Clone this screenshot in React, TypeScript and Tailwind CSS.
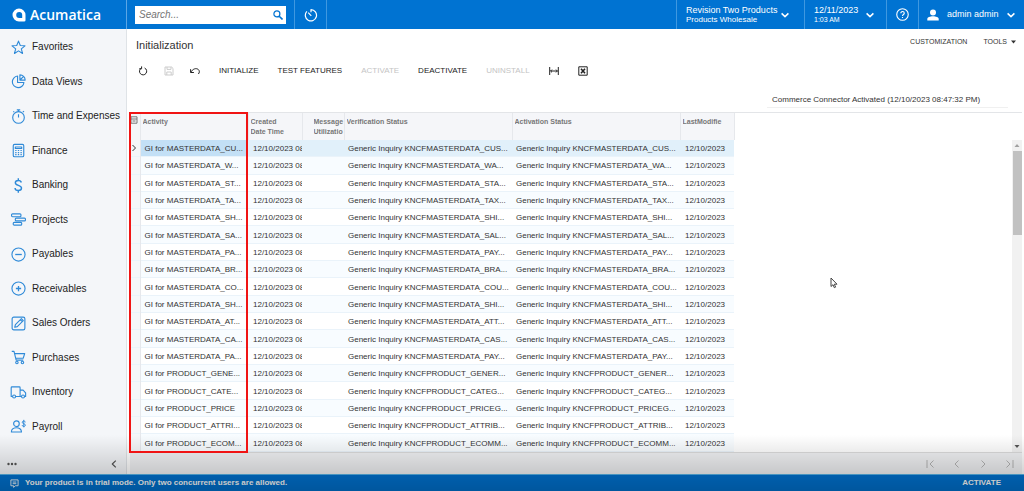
import type { ReactNode } from "react";
import clsx from "clsx";

const menu = [
    { name: "Favorites", icon: "star" },
    { name: "Data Views", icon: "pie" },
    { name: "Time and Expenses", icon: "watch" },
    { name: "Finance", icon: "calculator" },
    { name: "Banking", icon: "dollar" },
    { name: "Projects", icon: "bars" },
    { name: "Payables", icon: "minus" },
    { name: "Receivables", icon: "plus" },
    { name: "Sales Orders", icon: "edit" },
    { name: "Purchases", icon: "cart" },
    { name: "Inventory", icon: "truck" },
    { name: "Payroll", icon: "payroll" },
];

const menuIcons: Record<string, ReactNode> = {
    star: <path d="M8 1.2l1.9 4.7 5 .3-3.9 3.2 1.3 4.9L8 11.6l-4.3 2.7L5 9.4 1.1 6.2l5-.3z" />,
    pie: (
        <>
            <path d="M7 2.2a6.2 6.2 0 1 0 6.8 6.8H7z" />
            <path d="M9.5.9v5.6h5.6A5.7 5.7 0 0 0 9.5.9zM9.6 6.4l3.8-3.8" />
        </>
    ),
    watch: (
        <>
            <circle cx="8" cy="9" r="6.2" />
            <path d="M8 5.5V9M8 .8v2M6.2.9h3.6M12.6 3.4l1.3-1.2M3.4 3.4L2.5 2.6" />
        </>
    ),
    calculator: (
        <>
            <rect x="2.4" y="1.4" width="11.2" height="13.2" rx="1.4" />
            <path d="M4.6 4.2h6.8v1.6H4.6z" />
            <path d="M4.5 8h1.4M7.3 8h1.4M10.1 8h1.4M4.5 10.2h1.4M7.3 10.2h1.4M10.1 10.2h1.4M4.5 12.4h1.4M7.3 12.4h1.4M10.1 12.4h1.4" />
        </>
    ),
    dollar: <path d="M11 4.800C10.700 3.300 9.500 2.600 7.800 2.600 6 2.600 4.600 3.500 4.600 5c0 3.500 6.600 2.200 6.600 5.700 0 1.600-1.400 2.700-3.400 2.700S4.400 12.300 4.300 10.600M7.800 .2v2.400M7.800 13.400v2.400" strokeWidth="1.500" />,
    bars: (
        <>
            <rect x=".6" y="2" width="10" height="3" rx="1" />
            <rect x="4.600" y="6.500" width="10.800" height="3" rx="1" />
            <rect x="2.400" y="11" width="9" height="3" rx="1" />
        </>
    ),
    minus: (
        <>
            <circle cx="8" cy="8" r="7" />
            <path d="M4.500 8h7" strokeWidth="1.400" />
        </>
    ),
    plus: (
        <>
            <circle cx="8" cy="8" r="7" />
            <path d="M5.200 8h5.600M8 5.200v5.600" strokeWidth="1.400" />
        </>
    ),
    edit: (
        <>
            <rect x="1.200" y="1.200" width="13.600" height="13.600" rx="1.800" />
            <path d="M4 12l.7-2.700 6.400-6.400 2 2-6.400 6.400zM10 4l2 2" />
        </>
    ),
    cart: (
        <>
            <path d="M.8 1.500h2.400l2.300 9.300h7.600M3.800 3.800h10.800l-1.600 5H5" />
            <circle cx="6.300" cy="13.300" r="1.300" />
            <circle cx="12.200" cy="13.300" r="1.300" />
        </>
    ),
    truck: (
        <>
            <path d="M1.700 12.200H.2V2.800q0-.8.8-.8h7.900q.8 0 .8.800v9.400H5M9.700 5.500h3.200l2.700 3v3.700h-1.200M9.700 12.200h1.500" />
            <circle cx="3.300" cy="12.300" r="1.600" />
            <circle cx="12.800" cy="12.300" r="1.600" />
        </>
    ),
    payroll: (
        <>
            <circle cx="5.800" cy="5" r="3" />
            <path d="M.4 13.800c0-6 10.800-6 10.800 0z" />
            <path d="M15.200 3.600c0-2-3.200-1.800-3.200-.1 0 1.900 3.300 1.200 3.300 3.100 0 1.900-3.400 1.800-3.400-.1M13.600.9v8" strokeWidth="1" />
        </>
    ),
};

const columns = ["Activity", "Created Date Time", "Message Utilizatio", "Verification Status", "Activation Status", "LastModifie"];

const rows = [
    ["MASTERDATA_CU...", "MASTERDATA_CUS..."],
    ["MASTERDATA_W...", "MASTERDATA_WA..."],
    ["MASTERDATA_ST...", "MASTERDATA_STA..."],
    ["MASTERDATA_TA...", "MASTERDATA_TAX..."],
    ["MASTERDATA_SH...", "MASTERDATA_SHI..."],
    ["MASTERDATA_SA...", "MASTERDATA_SAL..."],
    ["MASTERDATA_PA...", "MASTERDATA_PAY..."],
    ["MASTERDATA_BR...", "MASTERDATA_BRA..."],
    ["MASTERDATA_CO...", "MASTERDATA_COU..."],
    ["MASTERDATA_SH...", "MASTERDATA_SHI..."],
    ["MASTERDATA_AT...", "MASTERDATA_ATT..."],
    ["MASTERDATA_CA...", "MASTERDATA_CAS..."],
    ["MASTERDATA_PA...", "MASTERDATA_PAY..."],
    ["PRODUCT_GENE...", "PRODUCT_GENER..."],
    ["PRODUCT_CATE...", "PRODUCT_CATEG..."],
    ["PRODUCT_PRICE", "PRODUCT_PRICEG..."],
    ["PRODUCT_ATTRI...", "PRODUCT_ATTRIB..."],
    ["PRODUCT_ECOM...", "PRODUCT_ECOMM..."],
];

function Icon({ className, box = 16, children }: { className: string; box?: number; children: ReactNode }) {
    return (
        <svg className={clsx("shrink-0", className)} viewBox={`0 0 ${box} ${box}`} fill="none" stroke="currentColor" strokeWidth="1.2" strokeLinejoin="round" aria-hidden="true">
            {children}
        </svg>
    );
}

function Chevron() {
    return <Icon className="size-2" box={8}><path d="M.6 2.400L4 5.600l3.400-3.200" strokeWidth="1.500" /></Icon>;
}

function Header() {
    return (
        <header className="flex h-[29px] shrink-0 bg-[#0073d2] text-white">
            <a href="#" className="flex w-[127px] items-center gap-1 border-r border-[#5aa6e6] pl-3">
                <svg className="size-[14px]" viewBox="0 0 14 14" aria-hidden="true">
                    <path fill="#fff" fillRule="evenodd" d="M7 .5A6.500 6.500 0 0 0 7 13.500h5.200q1.300 0 1.300-1.300V7A6.500 6.500 0 0 0 7 .5zM7.200 4A3 3 0 0 1 10.200 7v3H7.200A3 3 0 0 1 7.200 4z" />
                </svg>
                <span className="font-['Open_Sans',sans-serif] text-[14px] font-semibold leading-4">Acumatica</span>
            </a>
            <div className="flex items-center px-2">
                <label className="flex h-[18px] w-[151px] items-center bg-white pl-1 pr-[3px]">
                    <input aria-label="Search" placeholder="Search..." className="min-w-0 flex-1 text-[10px] italic leading-4 text-gray-700 outline-none placeholder:text-[#757575]" />
                    <Icon className="size-[10px] text-[#0073d2]" box={10}>
                        <circle cx="3.900" cy="3.900" r="3" />
                        <path d="M6.200 6.200l3.300 3.300" strokeWidth="1.600" />
                    </Icon>
                </label>
            </div>
            <button aria-label="Recent" className="flex w-[33px] items-center justify-center border-x border-[#3f98e0]">
                <Icon className="size-[14px]" box={14}>
                    <path d="M2.900 3.400A5.600 5.600 0 1 0 7 1.700v2.600M7.300 7.800L4.200 4.700" />
                </Icon>
            </button>
            <button className="ml-auto flex w-32 items-center gap-1 border-l border-[#3f98e0] pl-[9px] text-left">
                <span>
                    <span className="block text-[9px] leading-[10px]">Revision Two Products</span>
                    <span className="block text-[8px] leading-[10px]">Products Wholesale</span>
                </span>
                <Chevron />
            </button>
            <button className="flex w-[82px] items-center gap-2 border-l border-[#3f98e0] pl-[9px] text-left">
                <span>
                    <span className="block text-[9px] leading-[10px]">12/11/2023</span>
                    <span className="block text-[7px] leading-[10px]">1:03 AM</span>
                </span>
                <Chevron />
            </button>
            <button aria-label="Help" className="flex w-8 items-center justify-center border-l border-[#3f98e0]">
                <Icon className="size-[13px]" box={14}>
                    <circle cx="7" cy="7" r="6.200" />
                    <path d="M5.200 5.600c0-2.400 3.700-2.300 3.700 0C8.900 7 7 6.900 7 8.500M7 9.700v1.200" />
                </Icon>
            </button>
            <button className="flex w-[106px] items-center gap-2 border-l border-[#3f98e0] pl-2 text-[9px]">
                <svg className="size-3" viewBox="0 0 12 12" fill="currentColor" aria-hidden="true">
                    <circle cx="6" cy="3.400" r="3" />
                    <path d="M.3 11.500V10c0-3.600 11.400-3.600 11.400 0v1.500z" />
                </svg>
                admin admin
                <Chevron />
            </button>
        </header>
    );
}

function Sidebar() {
    return (
        <aside className="flex w-[127px] shrink-0 flex-col border-r border-[#dfe3e7] bg-[#f4f6f9]">
            <nav className="flex flex-1 flex-col pt-px">
                {menu.map((item) => (
                    <a key={item.name} href="#" className="flex flex-1 items-center gap-[6px] whitespace-nowrap pl-[11px] text-[10px] leading-3 text-[#222]">
                        <Icon className="size-[15px] overflow-visible text-[#2f8ad8]">{menuIcons[item.icon]}</Icon>
                        {item.name}
                    </a>
                ))}
            </nav>
            <div className="flex h-[30px] items-center justify-between pl-[7px] pr-2 pt-[10px] text-[#555]">
                <button aria-label="More items">
                    <svg className="h-1 w-[10px]" viewBox="0 0 10 4" fill="currentColor"><circle cx="1.500" cy="2" r="1.200" /><circle cx="5" cy="2" r="1.200" /><circle cx="8.500" cy="2" r="1.200" /></svg>
                </button>
                <button aria-label="Collapse menu">
                    <Icon className="size-2" box={8}><path d="M5.800 .6L2.300 4l3.500 3.400" /></Icon>
                </button>
            </div>
        </aside>
    );
}

function Toolbar() {
    return (
        <div className="flex items-center gap-[19px] px-2 text-[8px] leading-3 text-[#222]">
            <div className="flex items-center gap-4">
                <button aria-label="Refresh">
                    <Icon className="size-[10px]" box={10}><path d="M3.200 2.200a3.600 3.600 0 1 0 3.400-.2M3.600 .4v2.400H1.200" strokeWidth="1" /></Icon>
                </button>
                <button aria-label="Save" disabled className="text-[#ccc]">
                    <Icon className="size-[10px]" box={10}><path d="M1 1h6.600L9 2.400V9H1zM3 1v2.400h4V1M2.800 9V6h4.400v3" strokeWidth="1" /></Icon>
                </button>
                <button aria-label="Undo">
                    <Icon className="size-[10px]" box={10}><path d="M.6 3.200v3.300h3.300M.8 6.300C2.500 3 6 1.700 8.200 3.400c1.600 1.400 1.400 3.200.2 4.600" strokeWidth="1" /></Icon>
                </button>
            </div>
            <button>INITIALIZE</button>
            <button>TEST FEATURES</button>
            <button disabled className="text-[#c4c4c4]">ACTIVATE</button>
            <button>DEACTIVATE</button>
            <button disabled className="text-[#c4c4c4]">UNINSTALL</button>
            <button aria-label="Fit columns">
                <Icon className="size-[10px]" box={10}><path d="M.7 1v8M9.300 1v8M1.500 5h7M3 3.600L1.600 5 3 6.400M7 3.600L8.400 5 7 6.400" strokeWidth="1" /></Icon>
            </button>
            <button aria-label="Export to Excel">
                <Icon className="size-[10px]" box={10}><path d="M.8.8h8.400v8.400H.8z" strokeWidth="1" /><path d="M3 2.800l4 4.400M7 2.800L3 7.200" strokeWidth="1.600" /></Icon>
            </button>
        </div>
    );
}

function Grid() {
    return (
        <div className="relative flex min-h-0 flex-1 border-t border-[#e3e5e8]">
            <table className="h-full w-[604px] table-fixed border-collapse text-left text-[8px] leading-[10px] text-[#333]">
                <colgroup>
                    <col className="w-[10px]" />
                    <col className="w-[108px]" />
                    <col className="w-[54px]" />
                    <col className="w-[42px]" />
                    <col className="w-[168px]" />
                    <col className="w-[168px]" />
                    <col className="w-[54px]" />
                </colgroup>
                <thead>
                    <tr className="h-[27px] bg-[#f5f6f9] align-top text-[7px] text-[#777]">
                        <th aria-label="Row settings" className="border-r border-[#e6e8ec] p-0 pt-[3px]">
                            <Icon className="size-2" box={8}><path d="M1 .8h6v6.400H1zM1 3h6M2.500 5h3" strokeWidth="1" /></Icon>
                        </th>
                        {columns.map((column, index) => (
                            <th key={column} className={clsx("border-r border-[#e6e8ec] p-0 pt-1 font-bold", index === 2 ? "pl-[11px]" : "pl-[2px]")}>
                                <div className={clsx("overflow-hidden", index === 1 && "w-9")}>{column}</div>
                            </th>
                        ))}
                    </tr>
                </thead>
                <tbody>
                    {rows.map(([activity, status], index) => {
                        const selected = index === 0;
                        return (
                            <tr key={index} className={clsx("whitespace-nowrap border-b border-[#eaf3fa]", selected ? "bg-[#e1f0fa]" : index % 2 === 1 ? "bg-[#f8fcff]" : "bg-white")}>
                                <td className="border-r border-[#e6e8ec] bg-[#f5f6f9] p-0">
                                    {selected && <Icon className="size-2" box={8}><path d="M2.500 1l3 3-3 3" strokeWidth="1" /></Icon>}
                                </td>
                                <td className={clsx("overflow-hidden p-0 pl-1 pt-[2px]", selected && "bg-[#c3e0f6]")}>GI for {activity}</td>
                                <td className="p-0 pl-[5px] pt-[2px]"><div className="overflow-hidden">12/10/2023 08</div></td>
                                <td className="p-0"></td>
                                <td className="overflow-hidden p-0 pl-1 pt-[2px]">Generic Inquiry KNCF{status}</td>
                                <td className="overflow-hidden p-0 pl-1 pt-[2px]">Generic Inquiry KNCF{status}</td>
                                <td className="overflow-hidden p-0 pl-[5px] pt-[2px]">12/10/2023</td>
                            </tr>
                        );
                    })}
                </tbody>
            </table>
            <div className="ml-auto mt-[27px] flex w-[10px] flex-col items-center bg-[#f1f1f1] text-[#555]">
                <svg className="h-[11px] w-[6px]" viewBox="0 0 6 11" fill="#a0a0a0"><path d="M.5 7L3 4l2.500 3z" /></svg>
                <div className="h-[84px] w-[9px] bg-[#c1c1c1]"></div>
                <svg className="mt-auto h-[11px] w-[6px]" viewBox="0 0 6 11" fill="currentColor"><path d="M.5 4L3 7l2.500-3z" /></svg>
            </div>
            {/* highlight around the Activity column */}
            <div className="pointer-events-none absolute -bottom-px -left-px -top-px z-20 w-[119px] border-2 border-[#f01414]"></div>
        </div>
    );
}

function Pager() {
    const arrows = [
        { label: "First page", d: "M1 1v8M7.500 1.500L4 5l3.500 3.500" },
        { label: "Previous page", d: "M6.500 1.500L3 5l3.500 3.500" },
        { label: "Next page", d: "M3.500 1.500L7 5 3.500 8.500" },
        { label: "Last page", d: "M2.500 1.500L6 5 2.500 8.500M9 1v8" },
    ];
    return (
        <div className="flex h-[22px] shrink-0 items-center justify-end gap-4 border-t border-[#dcdcdc] bg-[#f1f2f4] pr-2 text-[#b4b4b4]">
            {arrows.map((arrow) => (
                <button key={arrow.label} aria-label={arrow.label}>
                    <Icon className="size-[10px]" box={10}><path d={arrow.d} strokeWidth="1" /></Icon>
                </button>
            ))}
        </div>
    );
}

export default function App() {
    return (
        <div className="relative flex h-screen flex-col overflow-hidden bg-white font-['Liberation_Sans',Arial,sans-serif]">
            <Header />
            <div className="flex min-h-0 flex-1">
                <Sidebar />
                <main className="flex min-w-0 flex-1 flex-col pl-[3px] pr-[2px]">
                    <div className="flex h-9 justify-between pl-[6px] pr-[6px]">
                        <h1 className="pt-2 text-[11px] leading-4 text-[#333]">Initialization</h1>
                        <div className="flex items-start gap-4 pt-2 text-[7px] leading-[10px] text-[#333]">
                            <button>CUSTOMIZATION</button>
                            <button className="flex items-center gap-1">
                                TOOLS
                                <svg className="h-1 w-[5px]" viewBox="0 0 5 4" fill="currentColor"><path d="M0 .5h5L2.500 3.500z" /></svg>
                            </button>
                        </div>
                    </div>
                    <Toolbar />
                    <div className="mb-1 mt-4 flex justify-end pr-[14px]">
                        <p className="w-[241px] border-b border-[#f0f0f0] pl-[5px] text-[8px] leading-[14px] text-[#333]">Commerce Connector Activated (12/10/2023 08:47:32 PM)</p>
                    </div>
                    <Grid />
                    <Pager />
                </main>
            </div>
            <footer className="flex h-[17px] shrink-0 items-center gap-[6px] border-t border-[#58b4e8] bg-[#0073d2] pl-[10px] pr-[23px] text-[8px] font-bold text-white">
                <Icon className="size-[9px]" box={10}><path d="M1 1h8v6.500H6L4 9.300V7.500H1zM3 3.400h4M3 5.200h4" strokeWidth="1" /></Icon>
                <span>Your product is in trial mode. Only two concurrent users are allowed.</span>
                <button className="ml-auto">ACTIVATE</button>
            </footer>
            <div className="pointer-events-none absolute inset-x-0 bottom-0 z-10 h-14 bg-gradient-to-t from-black/25 to-transparent"></div>
            <svg className="pointer-events-none absolute left-[830px] top-[277px] h-3 w-2" viewBox="0 0 8 12" fill="#fff" stroke="#444" aria-hidden="true">
                <path d="M1 1v8.500l2-1.800 1.300 3 1.300-.6-1.300-2.900h2.700z" />
            </svg>
        </div>
    );
}
